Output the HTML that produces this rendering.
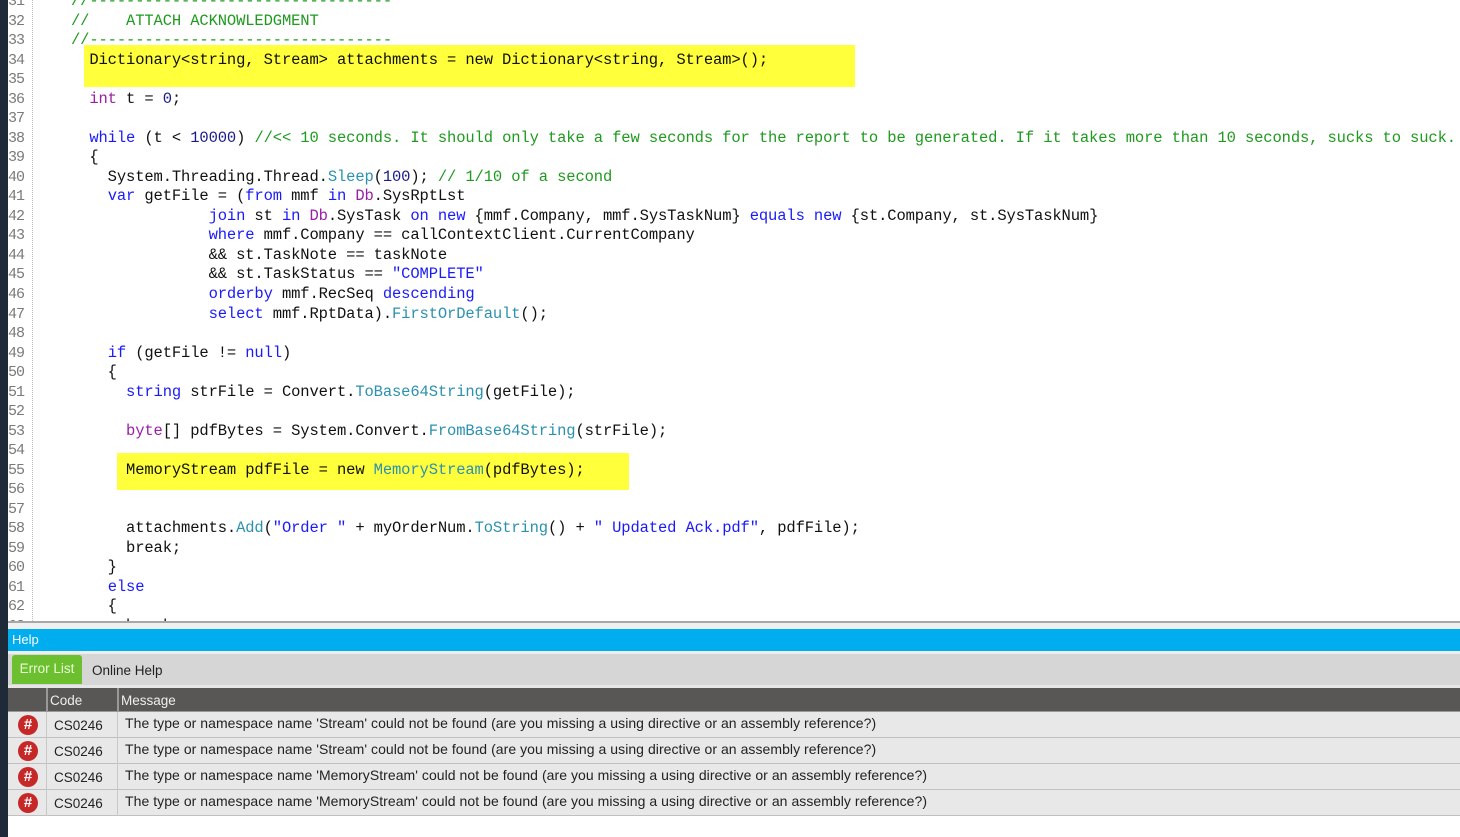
<!DOCTYPE html>
<html><head><style>
body{margin:0;width:1460px;height:837px;overflow:hidden;background:#fff;position:relative;font-family:"Liberation Sans",sans-serif}
.lb{position:absolute;left:0;top:0;width:8px;height:837px;background:#1e2a38}
.ln{position:absolute;left:8px;top:-8px;width:24px;font:15px/19.53px "Liberation Mono",monospace;color:#7a7a7a;white-space:pre;letter-spacing:-1px}
.sep{position:absolute;left:32px;top:0;height:621px;border-left:1px dotted #bbb}
.code{position:absolute;left:71px;top:-8px;font:15.5px/19.53px "Liberation Mono",monospace;letter-spacing:-0.13px;color:#111;white-space:pre;margin:0}
.hl{position:absolute;background:#ffff3c}
.k{color:#1a1aff}.t{color:#9b1fa6}.c{color:#1f9a1f}.m{color:#2b91af}.s{color:#1a1aff}.n{color:#1a1a8a}
.p{position:absolute;left:8px;right:0}
</style></head><body>
<div class="lb"></div>
<div class="hl" style="left:84px;top:45px;width:771px;height:42px"></div>
<div class="hl" style="left:117px;top:453px;width:512px;height:37px"></div>
<div class="ln">31
32
33
34
35
36
37
38
39
40
41
42
43
44
45
46
47
48
49
50
51
52
53
54
55
56
57
58
59
60
61
62
63</div>
<div class="sep"></div>
<pre class="code"><span class="c">//---------------------------------</span>
<span class="c">//    ATTACH ACKNOWLEDGMENT</span>
<span class="c">//---------------------------------</span>
  Dictionary&lt;string, Stream&gt; attachments = new Dictionary&lt;string, Stream&gt;();

  <span class="t">int</span> t = <span class="n">0</span>;

  <span class="k">while</span> (t &lt; <span class="n">10000</span>) <span class="c">//&lt;&lt; 10 seconds. It should only take a few seconds for the report to be generated. If it takes more than 10 seconds, sucks to suck.</span>
  {
    System.Threading.Thread.<span class="m">Sleep</span>(<span class="n">100</span>); <span class="c">// 1/10 of a second</span>
    <span class="k">var</span> getFile = (<span class="k">from</span> mmf <span class="k">in</span> <span class="t">Db</span>.SysRptLst
               <span class="k">join</span> st <span class="k">in</span> <span class="t">Db</span>.SysTask <span class="k">on</span> <span class="k">new</span> {mmf.Company, mmf.SysTaskNum} <span class="k">equals</span> <span class="k">new</span> {st.Company, st.SysTaskNum}
               <span class="k">where</span> mmf.Company == callContextClient.CurrentCompany
               &amp;&amp; st.TaskNote == taskNote
               &amp;&amp; st.TaskStatus == <span class="s">"COMPLETE"</span>
               <span class="k">orderby</span> mmf.RecSeq <span class="k">descending</span>
               <span class="k">select</span> mmf.RptData).<span class="m">FirstOrDefault</span>();

    <span class="k">if</span> (getFile != <span class="k">null</span>)
    {
      <span class="k">string</span> strFile = Convert.<span class="m">ToBase64String</span>(getFile);

      <span class="t">byte</span>[] pdfBytes = System.Convert.<span class="m">FromBase64String</span>(strFile);

      MemoryStream pdfFile = new <span class="m">MemoryStream</span>(pdfBytes);


      attachments.<span class="m">Add</span>(<span class="s">"Order "</span> + myOrderNum.<span class="m">ToString</span>() + <span class="s">" Updated Ack.pdf"</span>, pdfFile);
      break;
    }
    <span class="k">else</span>
    {
      break;</pre>
<div class="p" style="top:621px;height:2px;background:#a8a8a8"></div>
<div class="p" style="top:623px;height:6px;background:#f0f0f0"></div>
<div class="p" style="top:629px;height:22px;background:#00adef;color:#fff;font-size:13px;line-height:22px;padding-left:4px">Help</div>
<div class="p" style="top:651px;height:3px;background:#eee"></div>
<div class="p" style="top:654px;height:31px;background:#d6d6d6"></div>
<div style="position:absolute;left:12px;top:655px;width:70px;height:29px;background:#6cbf2f;border-radius:3px 3px 0 0;color:#e8ffd8;font-size:13.5px;line-height:27px;text-align:center">Error List</div>
<div style="position:absolute;left:92px;top:663px;font-size:13.5px;color:#222">Online Help</div>
<div class="p" style="top:685px;height:3px;background:#e6e6e6"></div>
<div class="p" style="top:688px;height:23px;background:#595755;border-bottom:1px solid #999"></div>
<div style="position:absolute;left:46px;top:688px;height:24px;border-left:2px solid #999"></div>
<div style="position:absolute;left:117px;top:688px;height:24px;border-left:2px solid #999"></div>
<div style="position:absolute;left:50px;top:693px;font-size:13.5px;color:#eee">Code</div>
<div style="position:absolute;left:121px;top:693px;font-size:13.5px;color:#eee">Message</div>
<div id="rows"></div>
<script>
var msgs=["Stream","Stream","MemoryStream","MemoryStream"],h="";
for(var i=0;i<4;i++){var y=712+i*26;
h+='<div class="p" style="top:'+y+'px;height:25px;background:#e8e8e8;border-bottom:1px solid #c0c0c0"></div>'+
'<div style="position:absolute;left:46px;top:'+y+'px;height:26px;border-left:1px solid #c8c8c8"></div>'+
'<div style="position:absolute;left:117px;top:'+y+'px;height:26px;border-left:1px solid #c8c8c8"></div>'+
'<div style="position:absolute;left:18px;top:'+(y+3)+'px;width:20px;height:20px;border-radius:50%;background:#c62828;color:#fff;font:bold 15px/20px \'Liberation Sans\',sans-serif;text-align:center">#</div>'+
'<div style="position:absolute;left:54px;top:'+(y+6)+'px;font-size:13.5px;color:#222">CS0246</div>'+
'<div style="position:absolute;left:125px;top:'+(y+3)+'px;font-size:14px;color:#222;letter-spacing:0.05px">The type or namespace name \''+msgs[i]+'\' could not be found (are you missing a using directive or an assembly reference?)</div>';}
document.getElementById("rows").innerHTML=h;
</script>
</body></html>
